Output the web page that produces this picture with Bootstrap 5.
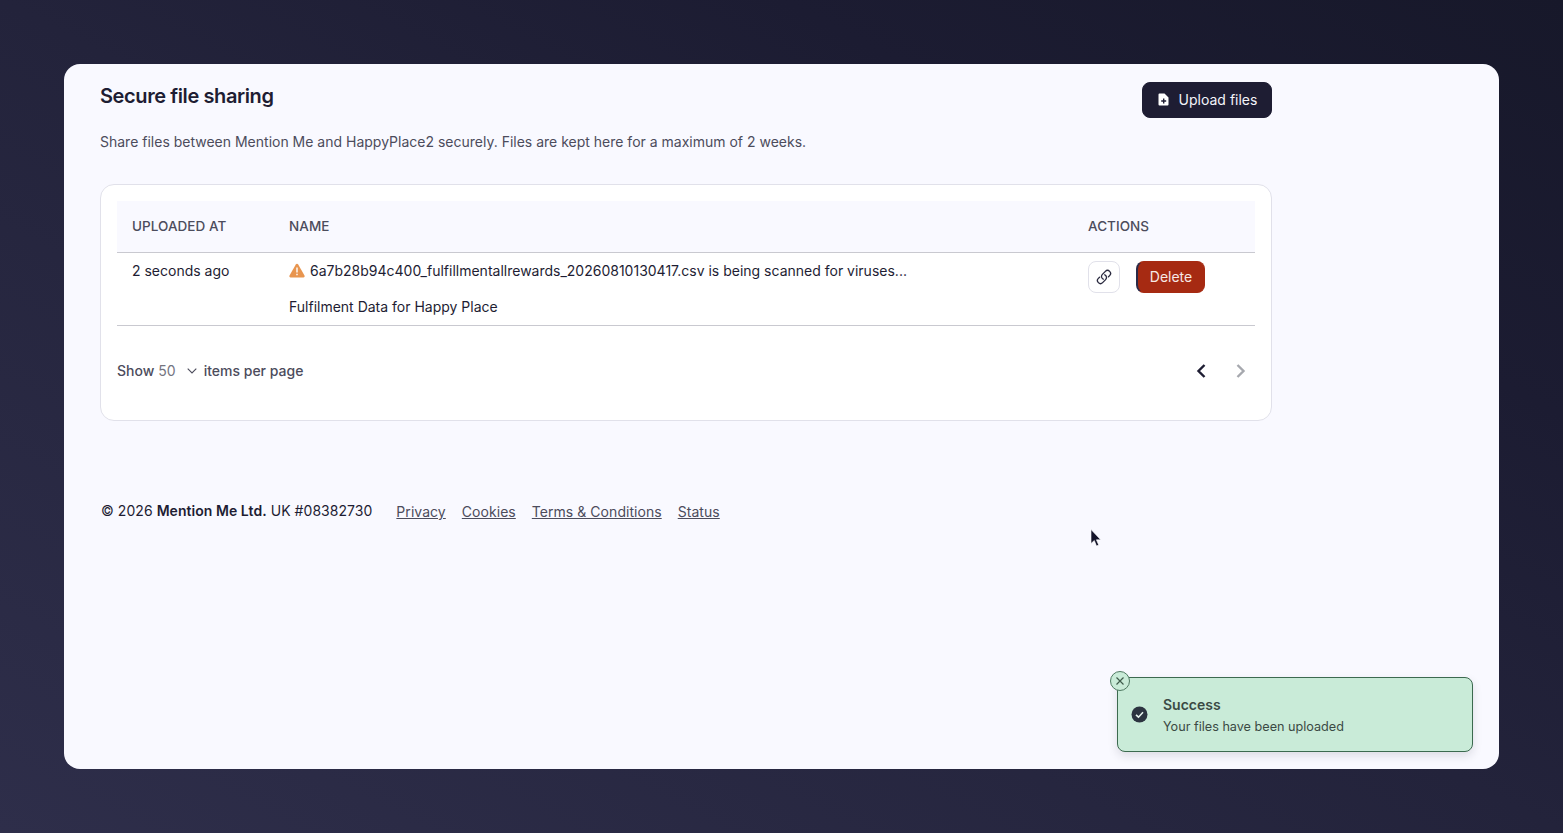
<!DOCTYPE html>
<html lang="en">
<head>
  <meta charset="UTF-8" />
  <meta name="viewport" content="width=device-width, initial-scale=1.0"/>
  <title>Secure file sharing</title>
  <link href="https://cdn.jsdelivr.net/npm/bootstrap@5.3.3/dist/css/bootstrap.min.css" rel="stylesheet">
  <style>
    html, body { height: 100%; }
    body {
      font-family: Inter, "Liberation Sans", sans-serif;
      font-size: 14px;
      color: #1e1d33;
      background: linear-gradient(to bottom left, #17182a 0%, #1c1c32 25%, #23233b 50%, #2e2e4a 100%);
      padding: 64px;
      overflow: hidden;
    }
    .panel {
      height: 705px;
      background: #f9f9ff;
      border-radius: 16px;
      padding: 18px 36px 0;
      position: relative;
    }
    .content { width: 1172px; }
    .page-title { font-size: 20px; font-weight: 600; line-height: 28px; letter-spacing: -.4px; margin: 0; }
    .lead-text { color: #4c4c5c; margin: 12px 0 0; line-height: 24px; }
    .btn-upload {
      --bs-btn-bg: #1e1d33; --bs-btn-border-color: #1e1d33; --bs-btn-color: #f4f4fa;
      --bs-btn-hover-bg: #1e1d33; --bs-btn-hover-border-color: #1e1d33; --bs-btn-hover-color: #f4f4fa;
      --bs-btn-font-size: 14px; --bs-btn-border-radius: 8px; --bs-btn-line-height: 20px;
      height: 36px; width: 130px; padding: 0 0 1px; gap: 9px;
    }
    .files-card {
      margin-top: 30px;
      height: 237px;
      background: #fff;
      border: 1px solid #e1e1ea;
      border-radius: 14px;
      padding: 16px;
    }
    .files-table { margin: 0; --bs-table-bg: transparent; color: #1e1d33; table-layout: fixed; }
    .files-table th {
      height: 51px; padding: 0 15px; vertical-align: middle;
      background: #f9f9ff; color: #4c4c5c; font-weight: 500; font-size: 13.5px; letter-spacing: .05px;
      border-bottom: 1px solid #c9c9d0;
    }
    .files-table td { padding: 8px 15px 0; height: 73px; vertical-align: top; border-bottom: 1px solid #c9c9d0; line-height: 20px; }
    .file-line { gap: 5px; }
    .file-note { margin-top: 16px; }
    .btn-link-icon {
      width: 32px; height: 32px; padding: 0; background: #fff;
      border: 1px solid #e1e1ea; border-radius: 8px;
    }
    .btn-delete {
      --bs-btn-bg: #a62a12; --bs-btn-border-color: #a62a12; --bs-btn-color: #f6e9e6;
      --bs-btn-hover-bg: #a62a12; --bs-btn-hover-border-color: #a62a12; --bs-btn-hover-color: #f6e9e6;
      --bs-btn-font-size: 14px; --bs-btn-border-radius: 8px;
      width: 69px; height: 32px; padding: 0; border-left: 2px solid #2a2a48;
    }
    .pager { margin-top: 35px; height: 20px; color: #4c4c5c; font-weight: 500; }
    .pager .per-page { color: #74747f; font-weight: 400; margin: 0 11px 0 4px; }
    .pager .items-label { margin-left: 7px; }
    .pager .next { margin-left: 30px; }
    .pager-arrows { padding-right: 9px; }
    .site-footer { margin-top: 80px; line-height: 20px; padding-left: 1px; }
    .site-footer span { letter-spacing: .05px; }
    .site-footer strong { font-weight: 600; }
    .site-footer a { color: #4c4c5c; margin-left: 16px; position: relative; top: 1px; letter-spacing: .05px; }
    .site-footer a:first-of-type { margin-left: 20px; }
    .toast-success {
      position: absolute; left: 1053px; top: 613px; width: 356px; height: 75px;
      background: #c9ebd8; border: 1px solid #3c6a4f; border-radius: 8px;
      box-shadow: 0 4px 10px rgba(30, 30, 50, .13);
      padding-left: 13px; gap: 15px; color: #3b4a44;
    }
    .toast-title { font-weight: 600; line-height: 20px; margin-top: 3px; }
    .toast-text { font-size: 12.65px; line-height: 20px; margin-top: 2px; }
    .toast-close {
      position: absolute; left: -8px; top: -7px; width: 20px; height: 20px; padding: 0;
      background: #c9ebd8; border: 1.5px solid #4f7a62; border-radius: 50%;
    }
    .mouse-cursor { position: absolute; left: 1026px; top: 465px; }
  </style>
</head>
<body>

<div class="panel">
  <div class="content">
    <!-- Header -->
    <div class="d-flex justify-content-between align-items-start">
      <h1 class="page-title">Secure file sharing</h1>
      <button class="btn btn-upload d-flex align-items-center justify-content-center">
        <svg width="13" height="13" viewBox="0 0 13 13" fill="#fff"><path d="M2.500 .5h5l4 4v7a1 1 0 0 1-1 1h-8a1 1 0 0 1-1-1v-10a1 1 0 0 1 1-1z"/><path d="M6 5.500h1.400v1.800h1.800v1.400H7.400v1.800H6V8.700H4.200V7.300H6z" fill="#1e1d33"/></svg>
        <span>Upload files</span>
      </button>
    </div>
    <p class="lead-text">Share files between Mention Me and HappyPlace2 securely. Files are kept here for a maximum of 2 weeks.</p>

    <!-- Files -->
    <div class="files-card">
      <table class="table files-table">
        <colgroup><col style="width:157px"><col><col style="width:182px"></colgroup>
        <thead>
          <tr><th>UPLOADED AT</th><th>NAME</th><th>ACTIONS</th></tr>
        </thead>
        <tbody>
          <tr>
            <td>2 seconds ago</td>
            <td>
              <div class="d-flex align-items-center file-line">
                <svg width="16" height="15" viewBox="0 0 16 15" class="flex-shrink-0"><path d="M8 .8c.5 0 .9.3 1.200.7l6.300 11c.5.9-.1 1.900-1.100 1.900H1.600c-1 0-1.600-1-1.100-1.900l6.300-11C7.100 1.100 7.500.8 8 .8z" fill="#e8954f"/><path d="M7.300 4.500h1.400v5H7.300zM7.300 10.700h1.400v1.500H7.300z" fill="#fff"/></svg>
                <span>6a7b28b94c400_fulfillmentallrewards_20260810130417.csv is being scanned for viruses...</span>
              </div>
              <div class="file-note">Fulfilment Data for Happy Place</div>
            </td>
            <td>
              <div class="d-flex gap-3">
                <button class="btn btn-link-icon d-flex align-items-center justify-content-center" aria-label="Copy link">
                  <svg width="16" height="16" viewBox="0 0 24 24" fill="none" stroke="#2b2b40" stroke-width="2" stroke-linecap="round" stroke-linejoin="round"><path d="M13.190 8.688a4.500 4.500 0 0 1 1.242 7.244l-4.500 4.500a4.500 4.500 0 0 1-6.364-6.364l1.757-1.757m13.350-.622 1.757-1.757a4.500 4.500 0 0 0-6.364-6.364l-4.500 4.500a4.500 4.500 0 0 0 1.242 7.244"/></svg>
                </button>
                <button class="btn btn-delete">Delete</button>
              </div>
            </td>
          </tr>
        </tbody>
      </table>

      <!-- Pagination -->
      <div class="pager d-flex justify-content-between align-items-center">
        <div class="d-flex align-items-center">
          <span>Show</span>
          <span class="per-page">50</span>
          <svg width="10" height="6" viewBox="0 0 10 6" fill="none" stroke="#4c4c5c" stroke-width="1.100"><path d="M.7.7 5 5l4.300-4.300"/></svg>
          <span class="items-label">items per page</span>
        </div>
        <div class="d-flex align-items-center pager-arrows">
          <svg width="10" height="14" viewBox="0 0 10 14" fill="none" stroke="#1e1d33" stroke-width="2.400"><path d="M8.500 1 2.500 7l6 6"/></svg>
          <svg class="next" width="10" height="14" viewBox="0 0 10 14" fill="none" stroke="#a6a8ae" stroke-width="2.400"><path d="M1.500 1l6 6-6 6"/></svg>
        </div>
      </div>
    </div>

    <!-- Footer -->
    <footer class="site-footer">
      <span>© 2026 <strong>Mention Me Ltd.</strong> UK #08382730</span>
      <a href="#">Privacy</a><a href="#">Cookies</a><a href="#">Terms &amp; Conditions</a><a href="#">Status</a>
    </footer>
  </div>

  <!-- Toast -->
  <div class="toast-success d-flex align-items-center">
    <button class="toast-close d-flex align-items-center justify-content-center" aria-label="Close">
      <svg width="10" height="10" viewBox="0 0 10 10" fill="none" stroke="#3f5c4c" stroke-width="1.200"><path d="m1.500 1.500 7 7M8.500 1.500l-7 7"/></svg>
    </button>
    <svg width="17" height="17" viewBox="0 0 17 17" class="flex-shrink-0"><circle cx="8.500" cy="8.500" r="8" fill="#2c3440"/><path d="m5 8.800 2.500 2.400L12 6.300" fill="none" stroke="#e8f4ee" stroke-width="1.600"/></svg>
    <div>
      <div class="toast-title">Success</div>
      <div class="toast-text">Your files have been uploaded</div>
    </div>
  </div>

  <!-- Mouse pointer -->
  <svg class="mouse-cursor" width="12" height="19" viewBox="0 0 12 19"><path d="M1 .5v14l3.300-3 2.200 5.500 2.200-1-2.300-5.200h4.300z" fill="#14142a" stroke="#fff" stroke-width=".6"/></svg>
</div>

<script src="https://cdn.jsdelivr.net/npm/bootstrap@5.3.3/dist/js/bootstrap.bundle.min.js"></script>
</body>
</html>
